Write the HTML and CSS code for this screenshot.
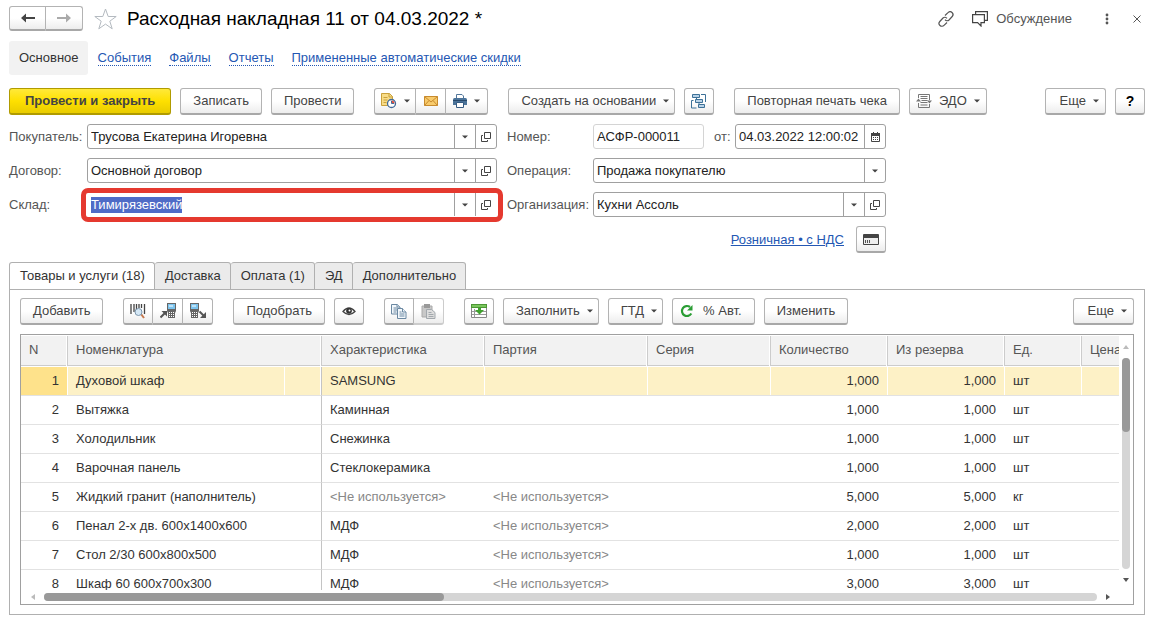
FILE: index.html
```html
<!DOCTYPE html>
<html lang="ru">
<head>
<meta charset="utf-8">
<title>Расходная накладная 11 от 04.03.2022 *</title>
<link rel="stylesheet" href="styles.css">
</head>
<body>
<svg class="defs" aria-hidden="true">
  <symbol id="i-caret" viewBox="0 0 6 4"><path d="M0 .500h6L3 3.500z" fill="#444"/></symbol>
  <symbol id="i-open" viewBox="0 0 10 10"><path d="M3.500.500h6v6h-6zM2 3.500H.500v6h6V8" fill="none" stroke="#444"/></symbol>
</svg>

<header class="titlebar">
  <div class="group nav">
    <button class="btn" aria-label="Назад"><svg width="14" height="10" viewBox="0 0 14 10"><path d="M0 5l5-4.500V4h9v2H5v3.500z" fill="#444"/></svg></button>
    <button class="btn" aria-label="Вперед"><svg width="14" height="10" viewBox="0 0 14 10"><path d="M14 5L9 .500V4H0v2h9v3.500z" fill="#aaa"/></svg></button>
  </div>
  <button class="plain star" aria-label="В избранное"><svg width="23" height="22" viewBox="0 0 23 22"><path d="M11.500 1l2.700 7.500h8L15.800 13.200l2.400 7.600-6.700-4.700-6.700 4.700 2.400-7.600L.800 8.500h8z" fill="#fff" stroke="#b4bac0"/></svg></button>
  <h1>Расходная накладная 11 от 04.03.2022 *</h1>
  <div class="title-tools">
    <button class="plain" aria-label="Ссылка"><svg width="16" height="16" viewBox="0 0 16 16" fill="none" stroke="#555" stroke-width="1.200"><path d="M7 4.500L10 1.700a2.600 2.600 0 0 1 4.200 3.800L11 9c-1.300 1.200-3 .900-4-.400M9 11.500L6 14.300a2.600 2.600 0 0 1-4.200-3.800L5 7c1.300-1.200 3-.900 4 .400"/></svg></button>
    <button class="plain talk"><svg width="16" height="16" viewBox="0 0 16 16" fill="none" stroke="#444" stroke-width="1.200"><path d="M.600 3.600h11.800v8H9V15l-3.400-3.400h-5zM3.600 3.200V.600h11.800v8.800h-2.800"/></svg>Обсуждение</button>
    <button class="plain dots" aria-label="Меню"><svg width="4" height="12" viewBox="0 0 4 12" fill="#555"><circle cx="2" cy="2" r="1.400"/><circle cx="2" cy="6" r="1.400"/><circle cx="2" cy="10" r="1.400"/></svg></button>
    <button class="plain" aria-label="Закрыть"><svg width="8" height="8" viewBox="0 0 8 8"><path d="M.500.500l7 7m0-7l-7 7" stroke="#555"/></svg></button>
  </div>
</header>

<nav class="sections">
  <a class="current" href="#main">Основное</a>
  <a href="#events"><span>События</span></a>
  <a href="#files"><span>Файлы</span></a>
  <a href="#reports"><span>Отчеты</span></a>
  <a href="#discounts"><span>Примененные автоматические скидки</span></a>
</nav>

<div class="toolbar">
  <button class="btn primary">Провести и закрыть</button>
  <button class="btn">Записать</button>
  <button class="btn">Провести</button>
  <div class="group apart">
    <button class="btn icon wide" aria-label="Отложить"><svg width="17" height="16" viewBox="0 0 17 16"><path d="M1.500.500h8l3 3v9h-11z" fill="#f8dc87" stroke="#c9a13c"/><path d="M9 .500V4h3.500M3.500 4.500h4M3.500 7h4M3.500 9.500h3" fill="none" stroke="#c9a13c"/><circle cx="11.500" cy="10.500" r="4" fill="#fff" stroke="#426b98" stroke-width="1.300"/><path d="M11.500 10.500V7.500a3 3 0 0 1 3 3z" fill="#e34e3c"/><path d="M11.500 8v2.500H14" fill="none" stroke="#426b98"/></svg><svg class="caret"><use href="#i-caret"/></svg></button>
    <button class="btn icon" aria-label="Письмо"><svg width="14" height="10" viewBox="0 0 14 10"><path d="M.500.500h13v9H.500z" fill="#f8cb6c" stroke="#c88b2e"/><path d="M.500.500L7 6l6.500-5.500M.500 9.500L5 4.500m8.500 5L9 4.500" fill="none" stroke="#c88b2e"/></svg></button>
    <button class="btn icon wide" aria-label="Печать"><svg width="14" height="14" viewBox="0 0 14 14"><path d="M3.500 5V.500H9L10.500 2v3" fill="#fff" stroke="#52779b"/><path d="M0 5.500Q0 4 1.500 4H12.500Q14 4 14 5.500V11H0z" fill="#4b7399"/><path d="M0 6.500h14" stroke="#28496b"/><path d="M3.500 8.500h7v5h-7z" fill="#fff" stroke="#365b82"/></svg><svg class="caret"><use href="#i-caret"/></svg></button>
  </div>
  <button class="btn drop apart">Создать на основании<svg class="caret"><use href="#i-caret"/></svg></button>
  <button class="btn icon" aria-label="Структура подчиненности"><svg width="16" height="15" viewBox="0 0 16 15" fill="#b9d3e8" stroke="#3d7198"><path d="M1.500.500h7v3h-7zM4.500 5.500h7v3h-7zM7.500 10.500h6v3h-6z"/><path d="M10 .500h4.500V8M2.500 6.500H.500v7.500h5M5.500 3.500v2M8 8.500v2" fill="none"/></svg></button>
  <button class="btn apart">Повторная печать чека</button>
  <button class="btn edo"><svg width="16" height="14" viewBox="0 0 16 14" fill="none" stroke="#777"><path d="M2.500 4V.500h11V6M13.500 10v3.500h-11V9M4.500 2.500h7M4.500 4.500h7M5.500 6.500h6M4.500 8.500h7M4.500 11h7"/><path d="M0 7.500l2.500-3 2.500 3zM11 6.500l2.500 3 2.500-3z" fill="#777" stroke="none"/></svg>ЭДО<svg class="caret"><use href="#i-caret"/></svg></button>
  <button class="btn drop end">Еще<svg class="caret"><use href="#i-caret"/></svg></button>
  <button class="btn icon help">?</button>
</div>

<form class="form" onsubmit="return false">
  <div class="col left">
    <label for="buyer">Покупатель:</label>
    <div class="field"><input id="buyer" value="Трусова Екатерина Игоревна"><button type="button" aria-label="Выбрать"><svg class="caret"><use href="#i-caret"/></svg></button><button type="button" aria-label="Открыть"><svg class="open"><use href="#i-open"/></svg></button></div>
    <label for="contract">Договор:</label>
    <div class="field"><input id="contract" value="Основной договор"><button type="button" aria-label="Выбрать"><svg class="caret"><use href="#i-caret"/></svg></button><button type="button" aria-label="Открыть"><svg class="open"><use href="#i-open"/></svg></button></div>
    <label for="store">Склад:</label>
    <div class="field marked"><input id="store" value="Тимирязевский"><button type="button" aria-label="Выбрать"><svg class="caret"><use href="#i-caret"/></svg></button><button type="button" aria-label="Открыть"><svg class="open"><use href="#i-open"/></svg></button></div>
  </div>
  <div class="col right">
    <label for="number">Номер:</label>
    <div class="pair">
      <div class="field pale"><input id="number" value="АСФР-000011"></div>
      <label for="date">от:</label>
      <div class="field date"><input id="date" value="04.03.2022 12:00:02"><button type="button" aria-label="Календарь"><svg width="9" height="10" viewBox="0 0 9 10"><path d="M.500 1.500h8v8h-8z" fill="none" stroke="#444"/><path d="M0 1h9v3H0zM2 0h1v1H2zM6 0h1v1H6z" fill="#444"/><path d="M2 5.500h5M2 7.500h5" stroke="#444" stroke-dasharray="1 1"/></svg></button></div>
    </div>
    <label for="operation">Операция:</label>
    <div class="field choice"><select id="operation"><option>Продажа покупателю</option></select><span><svg class="caret"><use href="#i-caret"/></svg></span></div>
    <label for="org">Организация:</label>
    <div class="field"><input id="org" value="Кухни Ассоль"><button type="button" aria-label="Выбрать"><svg class="caret"><use href="#i-caret"/></svg></button><button type="button" aria-label="Открыть"><svg class="open"><use href="#i-open"/></svg></button></div>
    <div class="price">
      <a href="#price">Розничная • с НДС</a>
      <button type="button" class="btn icon" aria-label="Оплата картой"><svg width="16" height="11" viewBox="0 0 16 11"><path d="M.500.500h15v10H.500z" fill="#eee" stroke="#444"/><path d="M0 1h16v3H0z" fill="#444"/><path d="M2.500 6v3M4.500 6v3M6.500 6v3" stroke="#555"/></svg></button>
    </div>
  </div>
</form>

<div class="tabs" role="tablist">
  <button role="tab" aria-selected="true">Товары и услуги (18)</button>
  <button role="tab">Доставка</button>
  <button role="tab">Оплата (1)</button>
  <button role="tab">ЭД</button>
  <button role="tab">Дополнительно</button>
</div>

<main class="panel">
  <div class="toolbar">
    <button class="btn">Добавить</button>
    <div class="group apart">
      <button class="btn icon" aria-label="Поиск по штрихкоду"><svg width="16" height="16" viewBox="0 0 16 16"><path d="M1 1v10M4 1v8M6.500 1v6M9 1v4M11.500 1v4M14.500 1v10" stroke="#444" stroke-width="1.300"/><path d="M11 11l3 4" stroke="#c6794e" stroke-width="2"/><circle cx="8.500" cy="9" r="3.500" fill="#d5e8f6" stroke="#7b95ab"/></svg></button>
      <button class="btn icon" aria-label="Загрузить из терминала"><svg width="16" height="16" viewBox="0 0 16 16"><path d="M7 0h9v8l-1 2v5H8v-5L7 8z" fill="#666"/><path d="M8 1h7v5H8z" fill="#7cc4ee"/><path d="M9 3h4" stroke="#fff"/><path d="M9 9h1v1H9zm2 0h1v1h-1zm2 0h1v1h-1zm-4 2h1v1H9zm2 0h1v1h-1zm2 0h1v1h-1zm-4 2h1v1H9zm2 0h1v1h-1zm2 0h1v1h-1z" fill="#fff"/><path d="M.500 14.500L5 10" stroke="#555" stroke-width="2"/><path d="M1.500 8H7v5.500z" fill="#555"/></svg></button>
      <button class="btn icon" aria-label="Выгрузить в терминал"><svg width="16" height="16" viewBox="0 0 16 16"><path d="M0 0h9v8l-1 2v5H1v-5L0 8z" fill="#666"/><path d="M1 1h7v5H1z" fill="#7cc4ee"/><path d="M2 3h4" stroke="#fff"/><path d="M2 9h1v1H2zm2 0h1v1H4zm2 0h1v1H6zm-4 2h1v1H2zm2 0h1v1H4zm2 0h1v1H6zm-4 2h1v1H2zm2 0h1v1H4zm2 0h1v1H6z" fill="#fff"/><path d="M9.500 8.500L14 13" stroke="#555" stroke-width="2"/><path d="M16 9v6h-6z" fill="#555"/></svg></button>
    </div>
    <button class="btn apart">Подобрать</button>
    <button class="btn icon" aria-label="Показать"><svg width="14" height="10" viewBox="0 0 14 10"><path d="M1 5.500Q7-1.500 13 5.500 7 11.500 1 5.500z" fill="#fff" stroke="#444" stroke-width="1.300"/><circle cx="7" cy="4.800" r="2.900" fill="#333"/><circle cx="7.500" cy="4.500" r="1" fill="#fff"/></svg></button>
    <div class="group apart">
      <button class="btn icon" aria-label="Копировать"><svg width="16" height="15" viewBox="0 0 16 15" fill="#f3f8fc" stroke="#6b88a2"><path d="M.500.500h6l2.500 2.500v7H.500z"/><path d="M6 .500V3h3M2.500 4h4M2.500 6h4M2.500 8h3"/><path d="M6.500 4.500h5L15 8v6.500H6.500z"/><path d="M11.500 4.500V8H15M8.500 8h2M8.500 10h5M8.500 12h5"/></svg></button>
      <button class="btn icon" aria-label="Вставить" disabled><svg width="15" height="15" viewBox="0 0 15 15"><path d="M1 2h10v11H1z" fill="#c8c8c8" stroke="#aaa"/><path d="M3 0h6v4H3z" fill="#999"/><path d="M5.500 5.500h5l3.500 3v6H5.500z" fill="#ddd" stroke="#a2a8ad"/><path d="M7.500 8.500h3M7.500 10.500h5M7.500 12.500h5" stroke="#a2a8ad"/></svg></button>
    </div>
    <button class="btn icon apart" aria-label="Таблица"><svg width="16" height="14" viewBox="0 0 16 14"><path d="M.500.500h15v13H.500z" fill="#fff" stroke="#888"/><path d="M0 0h16v4H0z" fill="#4d9636"/><path d="M1 1h14v2H1z" fill="#79c75c"/><path d="M1 7.500h14M1 10.500h14M3.500 5v8" stroke="#999"/><path d="M7 4h3v2h3l-4.500 4.500L4 6h3z" fill="#3fa22d"/></svg></button>
    <button class="btn drop">Заполнить<svg class="caret"><use href="#i-caret"/></svg></button>
    <button class="btn drop">ГТД<svg class="caret"><use href="#i-caret"/></svg></button>
    <button class="btn auto"><svg width="14" height="14" viewBox="0 0 14 14"><path d="M11.300 9.500A5 5 0 1 1 10 3" fill="none" stroke="#2a9d34" stroke-width="2.200"/><path d="M12.500 1v5.500H7z" fill="#2a9d34"/></svg>% Авт.</button>
    <button class="btn">Изменить</button>
    <button class="btn drop end">Еще<svg class="caret"><use href="#i-caret"/></svg></button>
  </div>

  <div class="grid">
    <div class="view">
      <table>
        <colgroup><col class="c-n"><col class="c-name"><col class="c-extra"><col class="c-char"><col class="c-char"><col class="c-serie"><col class="c-qty"><col class="c-qty"><col class="c-unit"><col class="c-price"></colgroup>
        <thead><tr><th>N</th><th colspan="2">Номенклатура</th><th>Характеристика</th><th>Партия</th><th>Серия</th><th>Количество</th><th>Из резерва</th><th>Ед.</th><th>Цена</th></tr></thead>
        <tbody>
          <tr class="selected"><td>1</td><td>Духовой шкаф</td><td></td><td>SAMSUNG</td><td></td><td></td><td>1,000</td><td>1,000</td><td>шт</td><td></td></tr>
          <tr><td>2</td><td>Вытяжка</td><td></td><td>Каминная</td><td></td><td></td><td>1,000</td><td>1,000</td><td>шт</td><td></td></tr>
          <tr><td>3</td><td>Холодильник</td><td></td><td>Снежинка</td><td></td><td></td><td>1,000</td><td>1,000</td><td>шт</td><td></td></tr>
          <tr><td>4</td><td>Варочная панель</td><td></td><td>Стеклокерамика</td><td></td><td></td><td>1,000</td><td>1,000</td><td>шт</td><td></td></tr>
          <tr><td>5</td><td>Жидкий гранит (наполнитель)</td><td></td><td class="unused">&lt;Не используется&gt;</td><td class="unused">&lt;Не используется&gt;</td><td></td><td>5,000</td><td>5,000</td><td>кг</td><td></td></tr>
          <tr><td>6</td><td>Пенал 2-х дв. 600х1400х600</td><td></td><td>МДФ</td><td class="unused">&lt;Не используется&gt;</td><td></td><td>2,000</td><td>2,000</td><td>шт</td><td></td></tr>
          <tr><td>7</td><td>Стол 2/30 600х800х500</td><td></td><td>МДФ</td><td class="unused">&lt;Не используется&gt;</td><td></td><td>1,000</td><td>1,000</td><td>шт</td><td></td></tr>
          <tr><td>8</td><td>Шкаф 60 600х700х300</td><td></td><td>МДФ</td><td class="unused">&lt;Не используется&gt;</td><td></td><td>3,000</td><td>3,000</td><td>шт</td><td></td></tr>
        </tbody>
      </table>
    </div>
    <div class="vbar"><i class="arrow up"></i><div class="track"><div class="thumb"></div></div><i class="arrow down"></i></div>
    <div class="hbar"><i class="arrow back"></i><div class="track"><div class="thumb"></div></div><i class="arrow next"></i></div>
  </div>
</main>
<script src="script.js"></script>
</body>
</html>
```
FILE: styles.css
```css
* { box-sizing: border-box; }
body {
  margin: 0;
  padding: 6px 5px 4px 9px;
  height: 100vh;
  display: flex;
  flex-direction: column;
  background: #fff;
  color: #333;
  font: 13px/16px "Liberation Sans", Arial, sans-serif;
}
button, input, select { font: inherit; color: inherit; }
svg { display: block; flex: none; }
.defs { position: absolute; width: 0; height: 0; }
.caret { width: 6px; height: 4px; }
.open { width: 10px; height: 10px; }

.btn {
  display: flex;
  align-items: center;
  justify-content: center;
  height: 27px;
  padding: 0 12px;
  border: 1px solid #b3b3b3;
  border-bottom: 2px solid #a8a8a8;
  border-radius: 3px;
  background: linear-gradient(#fff 50%, #ededed);
  color: #444;
  white-space: nowrap;
}
.btn.icon { width: 30px; padding: 0; }
.btn.wide { width: 42px; gap: 7px; }
.btn.drop { padding-right: 5px; gap: 7px; }
.btn.end { padding: 0 6px 0 14px; }
.btn.primary {
  padding: 0 15px;
  border-color: #b09b00;
  background: linear-gradient(#ffe93a, #fee000 50%, #e9cc00);
  font-weight: bold;
}
.btn.edo { padding: 0 6px; gap: 7px; }
.btn.auto { padding: 0 12px 0 7px; gap: 9px; }
.btn.help { color: #000; font-size: 14px; font-weight: bold; }
.btn:disabled { border-color: #ccc; }
.group { display: flex; }
.group .btn + .btn { border-left: 0; border-top-left-radius: 0; border-bottom-left-radius: 0; }
.group .btn:not(:last-child) { border-top-right-radius: 0; border-bottom-right-radius: 0; }
.plain {
  display: flex;
  align-items: center;
  padding: 0;
  border: 0;
  background: none;
  color: #555;
}

.titlebar { display: flex; align-items: center; height: 25px; }
.nav .btn { width: 37px; height: 25px; padding: 0; }
.star { margin: 0 10px 0 11px; }
h1 { margin: 0; color: #000; font-size: 19px; font-weight: normal; line-height: 24px; }
.title-tools { display: flex; align-items: center; margin-left: auto; padding-right: 4px; gap: 18px; }
.talk { gap: 8px; }
.dots { margin: 0 6px 0 15px; }

.sections { display: flex; align-items: center; gap: 18px; margin-top: 10px; }
.sections a { color: #2457b3; text-decoration: none; }
.sections span { border-bottom: 1px dotted #2457b3; }
.sections .current {
  margin-right: -8px;
  padding: 9px 9px 9px 10px;
  border-radius: 3px;
  background: #f2f2f2;
  color: #333;
}

.toolbar { display: flex; gap: 9px; }
.sections + .toolbar { margin-top: 13px; }
.apart { margin-left: 11px; }
.end { margin-left: auto; }

.form { display: flex; gap: 10px; margin-top: 9px; }
.col { display: grid; align-content: start; align-items: center; row-gap: 9px; color: #555; }
.left { grid-template-columns: 78px 410px; }
.right { grid-template-columns: 86px 293px; }
.field {
  position: relative;
  display: flex;
  height: 25px;
  border: 1px solid #a0a0a0;
  border-radius: 3px;
  background: #fff;
  color: #222;
}
.field input, .field select {
  flex: 1;
  min-width: 0;
  padding: 0 3px;
  border: 0;
  outline: 0;
  background: none;
}
.field input::selection { background: #4f6bc6; color: #fff; }
.field button, .choice span {
  display: flex;
  align-items: center;
  justify-content: center;
  width: 21px;
  padding: 0;
  border: 0;
  border-left: 1px solid #a0a0a0;
  background: none;
}
.choice { display: grid; grid-template-columns: 1fr 21px; }
.choice select { grid-area: 1 / 1 / 2 / 3; appearance: none; }
.choice span { grid-area: 1 / 2; pointer-events: none; }
.marked { border-color: #fff; }
.marked::after {
  content: "";
  position: absolute;
  inset: -5px -7px -6px -7px;
  border: 5px solid #e5392f;
  border-radius: 7px;
  pointer-events: none;
}
.pair { display: grid; grid-template-columns: 111px 1fr 151px; align-items: center; }
.pair label { padding-left: 10px; }
.pale { border-color: #d4d4d4; }
.price { grid-column: 1 / 3; display: flex; justify-content: flex-end; align-items: center; gap: 12px; }
.price a { color: #2457b3; }

.tabs { display: flex; margin-top: 9px; }
.tabs button {
  height: 28px;
  margin-bottom: -1px;
  padding: 0 9px 0 10px;
  border: 1px solid #b0b0b0;
  border-left-width: 0;
  border-radius: 3px 3px 0 0;
  background: #ebebeb;
  white-space: nowrap;
}
.tabs button:first-child { border-left-width: 1px; border-bottom-color: #fff; background: #fff; }

.panel {
  flex: 1;
  min-height: 0;
  display: flex;
  flex-direction: column;
  gap: 9px;
  padding: 8px 10px 9px;
  border: 1px solid #b0b0b0;
}
.grid {
  flex: 1;
  min-height: 0;
  display: grid;
  grid-template: minmax(0, 1fr) 14px / minmax(0, 1fr) 14px;
  border: 1px solid #a0a0a0;
}
.view { overflow: hidden; }
table { width: 1128px; table-layout: fixed; border-collapse: separate; border-spacing: 0; }
.c-n { width: 47px; }
.c-name { width: 217px; }
.c-extra { width: 37px; }
.c-char { width: 163px; }
.c-serie { width: 123px; }
.c-qty { width: 117px; }
.c-unit { width: 77px; }
.c-price { width: 67px; }
th {
  height: 32px;
  padding: 0 8px 3px;
  border: solid #fff;
  border-width: 1px 0;
  box-shadow: inset -1px 0 #ccc, inset -2px 0 #fff, inset 0 -1px #ccc;
  background: #f2f2f2;
  color: #555;
  font-weight: normal;
  text-align: left;
}
td { height: 29px; padding: 0 8px; border-bottom: 1px solid #e2e2e2; white-space: nowrap; }
td:nth-child(1), td:nth-child(7), td:nth-child(8) { padding-right: 9px; text-align: right; }
td:nth-child(3) { border-right: 1px solid #c4c4c4; }
.selected td { background: #fdf1c6; box-shadow: inset -1px 0 #fff; }
.selected td:first-child { background: #fee28b; }
.unused { color: #888; }

.vbar, .hbar { display: flex; align-items: center; }
.vbar { flex-direction: column; padding: 10px 0 8px; gap: 9px; }
.hbar { grid-column: 1 / 3; padding: 0 23px 0 10px; gap: 9px; }
.track { flex: 1; border-radius: 4px; background: #d5d5d5; }
.vbar .track { width: 8px; }
.hbar .track { height: 8px; }
.thumb { border-radius: 4px; background: #999; }
.vbar .thumb { height: 35%; }
.hbar .thumb { width: 38%; height: 8px; }
.arrow { border: 3px solid transparent; }
.up { border-top: 0; border-bottom: 4px solid #bbb; }
.down { border-bottom: 0; border-top: 4px solid #555; }
.back { border-left: 0; border-right: 4px solid #bbb; }
.next { border-right: 0; border-left: 4px solid #555; }
```
FILE: script.js
```js
const store = document.getElementById("store");
store.focus();
store.select();
```
